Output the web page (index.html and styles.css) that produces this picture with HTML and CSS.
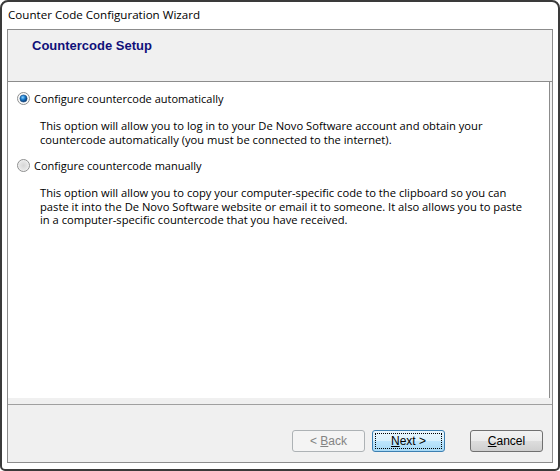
FILE: index.html
```html
<!DOCTYPE html>
<html>
<head>
<meta charset="utf-8">
<link rel="stylesheet" href="styles.css">
</head>
<body>
<div class="window">
  <div class="titlebar">Counter Code Configuration Wizard</div>
  <div class="panel">
    <div class="header">
      <div class="header-title">Countercode Setup</div>
    </div>
    <div class="content">
      <div class="option">
        <svg class="radio" width="13" height="13" viewBox="0 0 13 13">
          <defs>
            <radialGradient id="rb" cx="0.5" cy="0.5" r="0.5">
              <stop offset="0" stop-color="#e8e8e8"/>
              <stop offset="1" stop-color="#ffffff"/>
            </radialGradient>
            <radialGradient id="dot" cx="0.4" cy="0.35" r="0.6">
              <stop offset="0" stop-color="#8fd2ff"/>
              <stop offset="0.5" stop-color="#1b7fd0"/>
              <stop offset="1" stop-color="#0a3f7a"/>
            </radialGradient>
          </defs>
          <circle cx="6.5" cy="6.5" r="6" fill="url(#rb)" stroke="#8e8f8f" stroke-width="1"/>
          <circle cx="6.5" cy="6.5" r="3.6" fill="url(#dot)" stroke="#1f4f86" stroke-width="0.6"/>
        </svg>
        <span class="label">Configure countercode automatically</span>
      </div>
      <p class="desc">This option will allow you to log in to your De Novo Software account and obtain your<br>countercode automatically (you must be connected to the internet).</p>
      <div class="option">
        <svg class="radio" width="13" height="13" viewBox="0 0 13 13">
          <defs>
            <radialGradient id="rb2" cx="0.5" cy="0.5" r="0.5">
              <stop offset="0" stop-color="#d6d6d6"/>
              <stop offset="0.7" stop-color="#e6e6e6"/>
              <stop offset="1" stop-color="#f8f8f8"/>
            </radialGradient>
          </defs>
          <circle cx="6.5" cy="6.5" r="6" fill="url(#rb2)" stroke="#8e8f8f" stroke-width="1"/>
        </svg>
        <span class="label">Configure countercode manually</span>
      </div>
      <p class="desc">This option will allow you to copy your computer-specific code to the clipboard so you can<br>paste it into the De Novo Software website or email it to someone. It also allows you to paste<br>in a computer-specific countercode that you have received.</p>
    </div>
    <div class="footer">
      <button class="btn disabled"><span>&lt; <u>B</u>ack</span></button>
      <button class="btn default"><span class="focus"><span><u>N</u>ext &gt;</span></span></button>
      <button class="btn cancel"><span><u>C</u>ancel</span></button>
    </div>
  </div>
</div>
</body>
</html>
```
FILE: styles.css
```css
html, body {
  margin: 0;
  padding: 0;
  background: #ffffff;
}
.window {
  width: 560px;
  height: 471px;
  box-sizing: border-box;
  border: 2px solid #3a3a3a;
  border-radius: 8px 8px 5px 5px;
  background: #ffffff;
  display: flex;
  flex-direction: column;
  padding: 0 5px 6px 5px;
  font-family: "Open Sans", "Liberation Sans", Arial, sans-serif;
  font-size: 12px;
  color: #000;
}
.titlebar {
  height: 27px;
  line-height: 26px;
  padding-left: 1px;
  font-size: 11.6px;
  flex: none;
}
.panel {
  flex: 1;
  border: 1px solid #8c8c8c;
  background: #f0f0f0;
  display: flex;
  flex-direction: column;
}
.header {
  height: 51px;
  border-bottom: 1px solid #8c8c8c;
  background: #f0f0f0;
  flex: none;
}
.header-title {
  color: #10107a;
  font-family: "Liberation Sans", Arial, sans-serif;
  font-weight: bold;
  font-size: 13px;
  padding-left: 24px;
  padding-top: 8px;
}
.content {
  height: 316px;
  background: #ffffff;
  flex: none;
  padding-top: 8px;
  box-sizing: border-box;
  margin-right: 2px;
  border-right: 1px solid #8c8c8c;
}
.option {
  display: flex;
  align-items: center;
  height: 16px;
  padding-left: 9px;
}
.radio {
  flex: none;
  margin-right: 4px;
}
.label {
  font-size: 11px;
}
.desc {
  margin: 13px 0 11px 32px;
  line-height: 13.5px;
  font-size: 11.2px;
}
.footer {
  flex: 1;
  margin-top: 6px;
  border-top: 1px solid #a0a0a0;
  display: flex;
  justify-content: flex-end;
  align-items: flex-start;
  padding-top: 25px;
  padding-right: 9px;
}
.btn {
  width: 73px;
  height: 22px;
  box-sizing: border-box;
  border: 1px solid #707070;
  border-radius: 3px;
  background: linear-gradient(#f2f2f2 0%, #ebebeb 50%, #dddddd 51%, #cfcfcf 100%);
  font-family: "Liberation Sans", Arial, sans-serif;
  font-size: 12px;
  color: #000;
  padding: 0;
  margin: 0;
  display: flex;
  align-items: center;
  justify-content: center;
}
.btn.disabled {
  border-color: #adb2b5;
  background: #f4f4f4;
  color: #838383;
  margin-right: 7px;
}
.btn.default {
  border-color: #3c7fb1;
  background: linear-gradient(#eaf6fd 0%, #d9f0fc 50%, #bee6fd 51%, #a7d9f5 100%);
  margin-right: 25px;
  padding: 2px;
}
.btn.default .focus {
  flex: 1;
  align-self: stretch;
  border: 1px dotted #000;
  display: flex;
  align-items: center;
  justify-content: center;
}
```
